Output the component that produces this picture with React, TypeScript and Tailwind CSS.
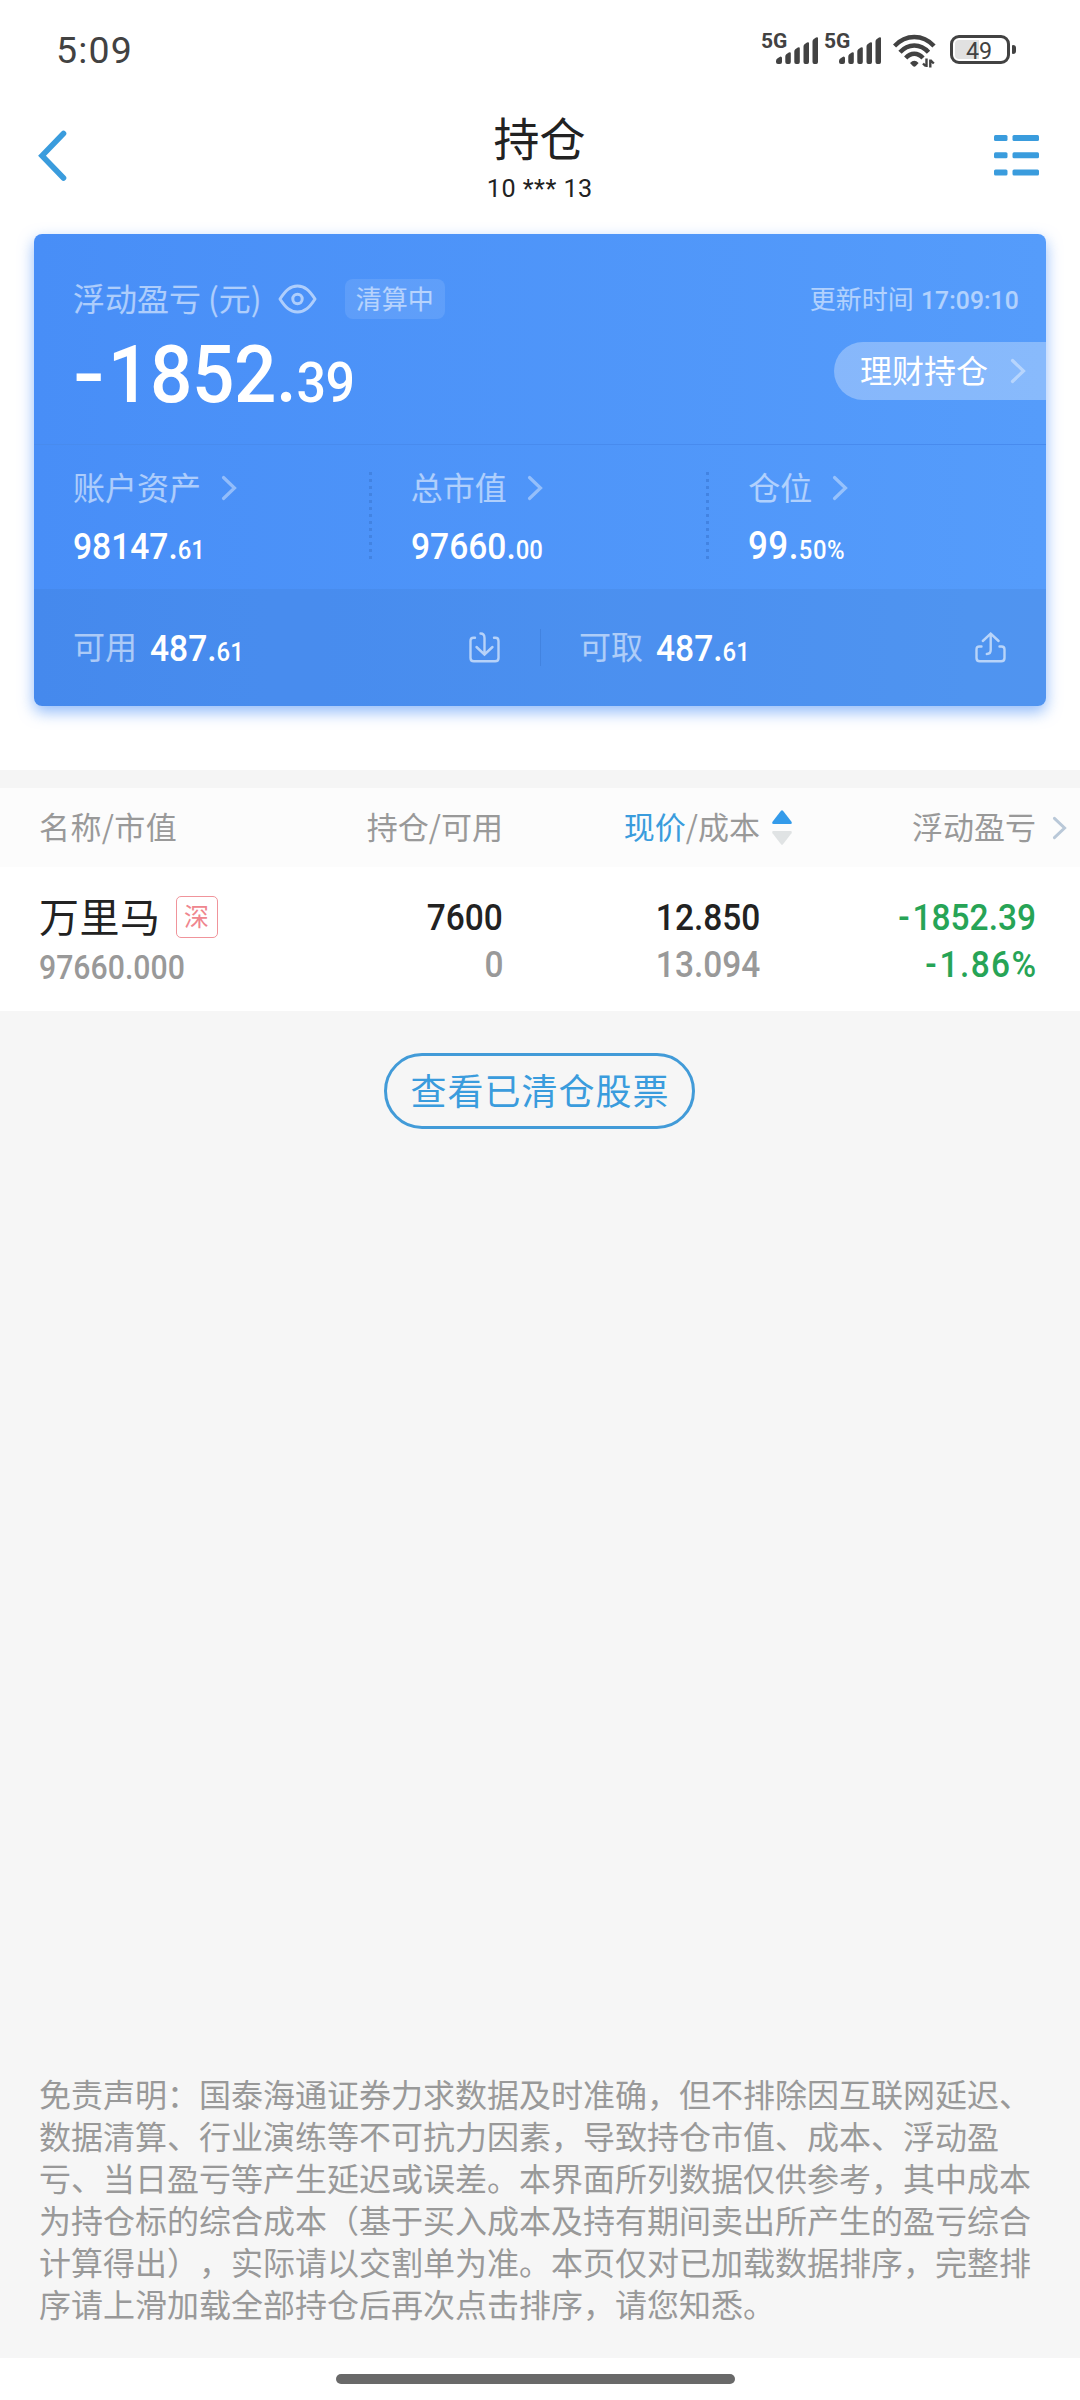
import type { ReactNode } from "react";

function Num({ children, className = "" }: { children: ReactNode; className?: string }) {
  return (
    <span className={`inline-block whitespace-nowrap font-['Roboto',sans-serif] leading-none ${className}`}>
      {children}
    </span>
  );
}

function Signal() {
  return (
    <div className="flex h-[30px] w-[57px] items-start">
      <span className="font-['Roboto',sans-serif] text-[21px] font-bold leading-[15px]">5G</span>
      <svg className="-ml-[11px] mt-[3px] shrink-0" width="43" height="27" viewBox="0 0 43 27" fill="#424242">
        <path d="M0 24q0-2 2-3l2.500-1.500q1.500 0 1.500 1.500V25q0 2-2 2H2q-2 0-2-2z" />
        <path d="M9.300 19.500q0-1.500 1-2.200l2.500-1.800q2-.8 2 .8V25q0 2-1.700 2h-2q-1.800 0-1.800-2z" />
        <path d="M18.300 14.500q0-1.500 1-2.200l2.500-1.800q2-.8 2 .8V25q0 2-1.700 2h-2q-1.800 0-1.800-2z" />
        <path d="M27.500 9.500q0-1.500 1-2.200L31 5.500q2-.8 2 .8V25q0 2-1.700 2h-2q-1.800 0-1.800-2z" />
        <path d="M36.500 4.500q0-1.500 1-2.200L40 .5q2-.8 2 .8V25q0 2-1.700 2h-2q-1.800 0-1.800-2z" />
      </svg>
    </div>
  );
}

function Wifi() {
  return (
    <svg width="43" height="34" viewBox="0 0 43 34" fill="none" stroke="#424242" strokeWidth="4.400">
      <path d="M1.500 12Q10 3 21.300 3T41 12" />
      <path d="M7 18.300Q13 11.500 21.300 11.500T35.500 18.300" />
      <path d="M12.700 24Q16.500 19.700 21.300 19.700T30 24" />
      <path d="M17 29q4.300-4.500 8.600 0l-2.800 3q-1.500 1.500-3 0z" fill="#424242" stroke="none" />
      <path d="M33.500 24.500V33M30 29.500l2.500 2.500M37.300 33.500V25.500M37.300 26l3.500 3.500" strokeWidth="2.400" />
    </svg>
  );
}

function Battery() {
  return (
    <div className="flex items-center">
      <div className="flex h-[29px] w-[60px] rounded-[9px] border-[3px] border-[#424242] p-[2px]">
        <div className="h-full w-[24px] shrink-0 rounded-l-[4px] bg-[#e1e1e1]" />
        <Num className="-ml-[13px] -mt-px origin-left scale-x-[0.97] text-[24px] font-[450] leading-[21px]">49</Num>
      </div>
      <div className="ml-[2px] h-[9px] w-[4px] rounded-r-[3px] rounded-l-[1px] bg-[#424242]" />
    </div>
  );
}

function Chevron({ className = "", size = "h-[26px] w-[16px]" }: { className?: string; size?: string }) {
  return (
    <svg className={`${size} ${className}`} viewBox="0 0 16 26" fill="none" stroke="currentColor" strokeWidth="3.200" strokeLinecap="round">
      <path d="M2.500 2.500 13.500 13 2.500 23.500" />
    </svg>
  );
}

function Eye() {
  return (
    <svg width="39" height="30" viewBox="0 0 39 30" fill="none" stroke="currentColor" strokeWidth="3">
      <path d="M2 15C7.500 6.500 12 2 19.500 2S31.500 6.500 37 15C31.500 23.500 27 28 19.500 28S7.500 23.500 2 15Z" strokeLinejoin="round" />
      <circle cx="19.500" cy="15" r="4.700" />
    </svg>
  );
}

function TransferIn() {
  return (
    <svg width="31" height="31" viewBox="0 0 31 31" fill="none" stroke="currentColor" strokeWidth="2.400" strokeLinecap="round">
      <path d="M6 5.800H4.500Q1.500 5.800 1.500 9V26Q1.500 29.300 4.800 29.300H26.200Q29.500 29.300 29.500 26V9Q29.500 5.800 26.500 5.800H25" />
      <path d="M11.500 1.500Q15.500 1.500 15.500 6V22M7.500 15 15.500 22.500 23.500 15" />
    </svg>
  );
}

function TransferOut() {
  return (
    <svg width="31" height="31" viewBox="0 0 31 31" fill="none" stroke="currentColor" strokeWidth="2.400" strokeLinecap="round">
      <path d="M6.500 14.500H4.500Q1.500 14.500 1.500 17.500V26Q1.500 29.300 4.800 29.300H26.200Q29.500 29.300 29.500 26V17.500Q29.500 14.500 26.500 14.500H24.500" />
      <path d="M11.800 22Q15.700 22 15.700 18V2M7.800 9 15.700 1.700 23.600 9" />
    </svg>
  );
}

function Metric({
  label,
  whole,
  frac,
  first,
  size = "text-[36.500px]",
}: {
  label: string;
  whole: string;
  frac: string;
  first?: boolean;
  size?: string;
}) {
  return (
    <div className={`relative flex flex-1 flex-col pt-[25px] ${first ? "pl-[39px]" : "pl-[40px]"}`}>
      {!first && (
        <div className="absolute left-[-2px] top-[27px] h-[91px] w-[3px] bg-[repeating-linear-gradient(to_bottom,#4283e2_0px,#4283e2_3px,transparent_3px,transparent_7px)]" />
      )}
      <div className="flex h-[32px] items-center text-white/55">
        <span className="text-[32px] leading-none">{label}</span>
        <Chevron className="ml-[20px] mt-[3px] text-white/40" />
      </div>
      <div className="mt-[26px] flex h-[37px] items-end">
        <Num className={`origin-left scale-x-[0.92] font-medium text-white ${size}`}>
          {whole}
          <span className="text-[26px]">{frac}</span>
        </Num>
      </div>
    </div>
  );
}

function Balance({ label, icon }: { label: string; icon: ReactNode }) {
  return (
    <div className="flex flex-1 items-center pl-[39px] pr-[40px]">
      <span className="mb-[5px] text-[32px] leading-none text-white/55">{label}</span>
      <Num className="ml-[13px] mt-[4px] origin-left scale-x-[0.92] text-[36.500px] font-medium text-white">
        487.<span className="text-[26px]">61</span>
      </Num>
      <span className="ml-auto text-white/60">{icon}</span>
    </div>
  );
}

const disclaimer = [
  "免责声明：国泰海通证券力求数据及时准确，但不排除因互联网延迟、",
  "数据清算、行业演练等不可抗力因素，导致持仓市值、成本、浮动盈",
  "亏、当日盈亏等产生延迟或误差。本界面所列数据仅供参考，其中成本",
  "为持仓标的综合成本（基于买入成本及持有期间卖出所产生的盈亏综合",
  "计算得出），实际请以交割单为准。本页仅对已加载数据排序，完整排",
  "序请上滑加载全部持仓后再次点击排序，请您知悉。",
];

export default function App() {
  return (
    <div
      lang="zh-CN"
      className="flex h-[2400px] w-[1080px] flex-col overflow-hidden bg-white font-['Noto_Sans_CJK_SC',sans-serif] text-[#222222]"
    >
      <div className="flex h-[100px] shrink-0 items-start justify-between pl-[56px] pr-[64px] text-[#424242]">
        <Num className="mt-[32px] text-[37.500px] font-[450] tracking-[1.200px]">5:09</Num>
        <div className="mt-[34px] flex items-start">
          <Signal />
          <div className="ml-[6px]">
            <Signal />
          </div>
          <div className="ml-[12px]">
            <Wifi />
          </div>
          <div className="ml-[14px] mt-[1px]">
            <Battery />
          </div>
        </div>
      </div>

      <header className="flex h-[134px] shrink-0 items-start justify-between pl-[37px] pr-[41px]">
        <svg className="mt-[30px] w-[45px]" width="45" height="52" viewBox="0 0 45 52" fill="none" stroke="#3a9cdd" strokeWidth="5.600">
          <path d="M26.500 3.500 5 25.700 26.500 48" strokeLinecap="round" />
        </svg>
        <div className="flex flex-col items-center pl-[3px]">
          <h1 className="mt-[13px] text-[46px] font-normal leading-none">持仓</h1>
          <Num className="mt-[16px] scale-x-[0.95] text-[26.500px] font-[450] tracking-[0.500px]">10 *** 13</Num>
        </div>
        <svg className="mt-[35px]" width="45" height="41" viewBox="0 0 45 41" fill="#3a9cdd">
          <rect x="0" y="0" width="13.500" height="6" rx="1.500" />
          <rect x="18.500" y="0" width="26.500" height="6" rx="1.500" />
          <rect x="0" y="17.300" width="13.500" height="6" rx="1.500" />
          <rect x="18.500" y="17.300" width="26.500" height="6" rx="1.500" />
          <rect x="0" y="34.600" width="13.500" height="6" rx="1.500" />
          <rect x="18.500" y="34.600" width="26.500" height="6" rx="1.500" />
        </svg>
      </header>

      <section className="mx-[34px] flex h-[472px] shrink-0 flex-col overflow-hidden rounded-[8px] bg-linear-to-r from-[#488ef7] to-[#559cfb] shadow-[0_6px_15px_rgba(72,142,247,0.6)]">
        <div className="h-[211px] border-b border-[#488bee] pt-[45px]">
          <div className="flex h-[40px] items-center pl-[39px] pr-[26px] text-white/55">
            <span className="mb-[5px] flex text-[32px] leading-none">
              浮动盈亏<span className="ml-[7px]">(</span>元<span>)</span>
            </span>
            <span className="ml-[16px]">
              <Eye />
            </span>
            <span className="ml-[28px] flex h-[40px] w-[100px] justify-center rounded-[8px] bg-white/10 pt-[6px] text-[26px] leading-none">
              清算中
            </span>
            <span className="mb-[3px] ml-auto text-[26px] leading-none">更新时间</span>
            <Num className="-mr-[6px] ml-[7px] mt-[2px] origin-left scale-x-[0.93] text-[26.500px] font-medium tracking-[0.100px]">17:09:10</Num>
          </div>
          <div className="flex items-start justify-between pl-[39px]">
            <Num className="mt-[17px] origin-left scale-x-[0.945] text-[79px] font-medium text-white">
              <span className="mr-[10px] inline-block origin-left scale-x-[1.25]">-</span>
              <span className="tracking-[-0.400px]">1852.</span>
              <span className="text-[55px] tracking-[-0.500px]">39</span>
            </Num>
            <div className="mt-[23px] flex h-[58px] w-[212px] items-center rounded-l-full bg-white/30 pl-[26px]">
              <span className="mb-[4px] text-[32px] leading-none text-white">理财持仓</span>
              <Chevron className="ml-[22px] text-white/40" />
            </div>
          </div>
        </div>
        <div className="flex h-[144px]">
          <Metric label="账户资产" whole="98147." frac="61" first />
          <Metric label="总市值" whole="97660." frac="00" />
          <Metric label="仓位" whole="99." frac="50%" size="text-[38px] tracking-[0.500px]" />
        </div>
        <div className="flex h-[117px] items-center bg-[#3c76c8]/20">
          <Balance label="可用" icon={<TransferIn />} />
          <div className="-mr-px h-[37px] w-px bg-[#4283e0]" />
          <Balance label="可取" icon={<TransferOut />} />
        </div>
      </section>

      <div className="mt-[64px] h-[18px] shrink-0 bg-[#f5f5f5]" />

      <div className="grid h-[79px] shrink-0 grid-cols-[200px_264px_257px_276px_44px] items-center bg-[#fcfcfc] pl-[39px] text-[31px] leading-none text-[#999999]">
        <span className="mb-[5px] tracking-[0.400px]">名称/市值</span>
        <span className="mb-[5px] text-right">持仓/可用</span>
        <span className="mb-[5px] text-right">
          <span className="text-[#3a9cdd]">现价</span>/成本
        </span>
        <div className="flex items-center justify-between pl-[12px]">
          <svg width="20" height="35" viewBox="0 0 20 35">
            <path d="M9 .8q1-1 2 0l8.500 11q1 2.200-1 2.200h-17q-2 0-1-2.200z" fill="#349bea" />
            <path d="M9 34.200q1 1 2 0l8.500-11q1-2.200-1-2.200h-17q-2 0-1 2.200z" fill="#e0e3e4" />
          </svg>
          <span className="mb-[5px]">浮动盈亏</span>
        </div>
        <Chevron className="ml-[16px] text-[#b9c8d8]" size="h-[24px] w-[15px]" />
      </div>

      <div className="grid h-[144px] shrink-0 grid-cols-[200px_264px_257px_276px] pl-[39px]">
        <div className="flex flex-col items-start pt-[28px]">
          <div className="flex h-[44px] items-center">
            <span className="mb-[4px] whitespace-nowrap text-[40px] leading-none tracking-[0.500px]">万里马</span>
            <span className="ml-[15px] flex h-[42px] w-[42px] justify-center rounded-[5px] border border-[#f0949b] pt-[6px] text-[25px] leading-none text-[#ef868e]">
              深
            </span>
          </div>
          <Num className="mt-[13px] origin-left scale-x-[0.930] text-[32.500px] font-medium text-[#999999]">97660.000</Num>
        </div>
        <div className="flex flex-col items-end pt-[33px] text-[36px] font-medium">
          <Num className="origin-right scale-x-[0.930]">7600</Num>
          <Num className="mt-[11px] origin-right scale-x-[0.930] text-[#999999]">0</Num>
        </div>
        <div className="flex flex-col items-end pt-[33px] text-[36px] font-medium">
          <Num className="origin-right scale-x-[0.930]">12.850</Num>
          <Num className="mt-[11px] origin-right scale-x-[0.930] text-[#999999]">13.094</Num>
        </div>
        <div className="flex flex-col items-end pt-[33px] text-[36px] font-medium text-[#27a456]">
          <Num className="origin-right scale-x-[0.930]">
            <span className="mr-[3px]">-</span>1852.39
          </Num>
          <Num className="mt-[11px] origin-right scale-x-[0.930]">
            <span className="mr-[3px]">-</span>
            <span className="tracking-[1.500px]">1.86</span>%
          </Num>
        </div>
      </div>

      <main className="flex h-[1347px] shrink-0 flex-col items-center bg-[#f6f6f6]">
        <button className="mr-[2px] mt-[42px] flex h-[76px] w-[311px] justify-center whitespace-nowrap rounded-full border-[3px] border-[#429bd8] pl-[2px] pt-[15px] text-[36px] leading-none tracking-[1px] text-[#3a9cdd]">
          查看已清仓股票
        </button>
        <p className="mb-[34px] mt-auto w-full pl-[39px] text-[32px] leading-[42px] text-[#999999] [text-spacing-trim:space-all]">
          {disclaimer.map((line) => (
            <span key={line} className="block whitespace-nowrap">
              {line}
            </span>
          ))}
        </p>
      </main>

      <div className="flex h-[42px] shrink-0 pl-[336px] pt-[16px]">
        <div className="h-[10px] w-[399px] rounded-full bg-[#696969]" />
      </div>
    </div>
  );
}
